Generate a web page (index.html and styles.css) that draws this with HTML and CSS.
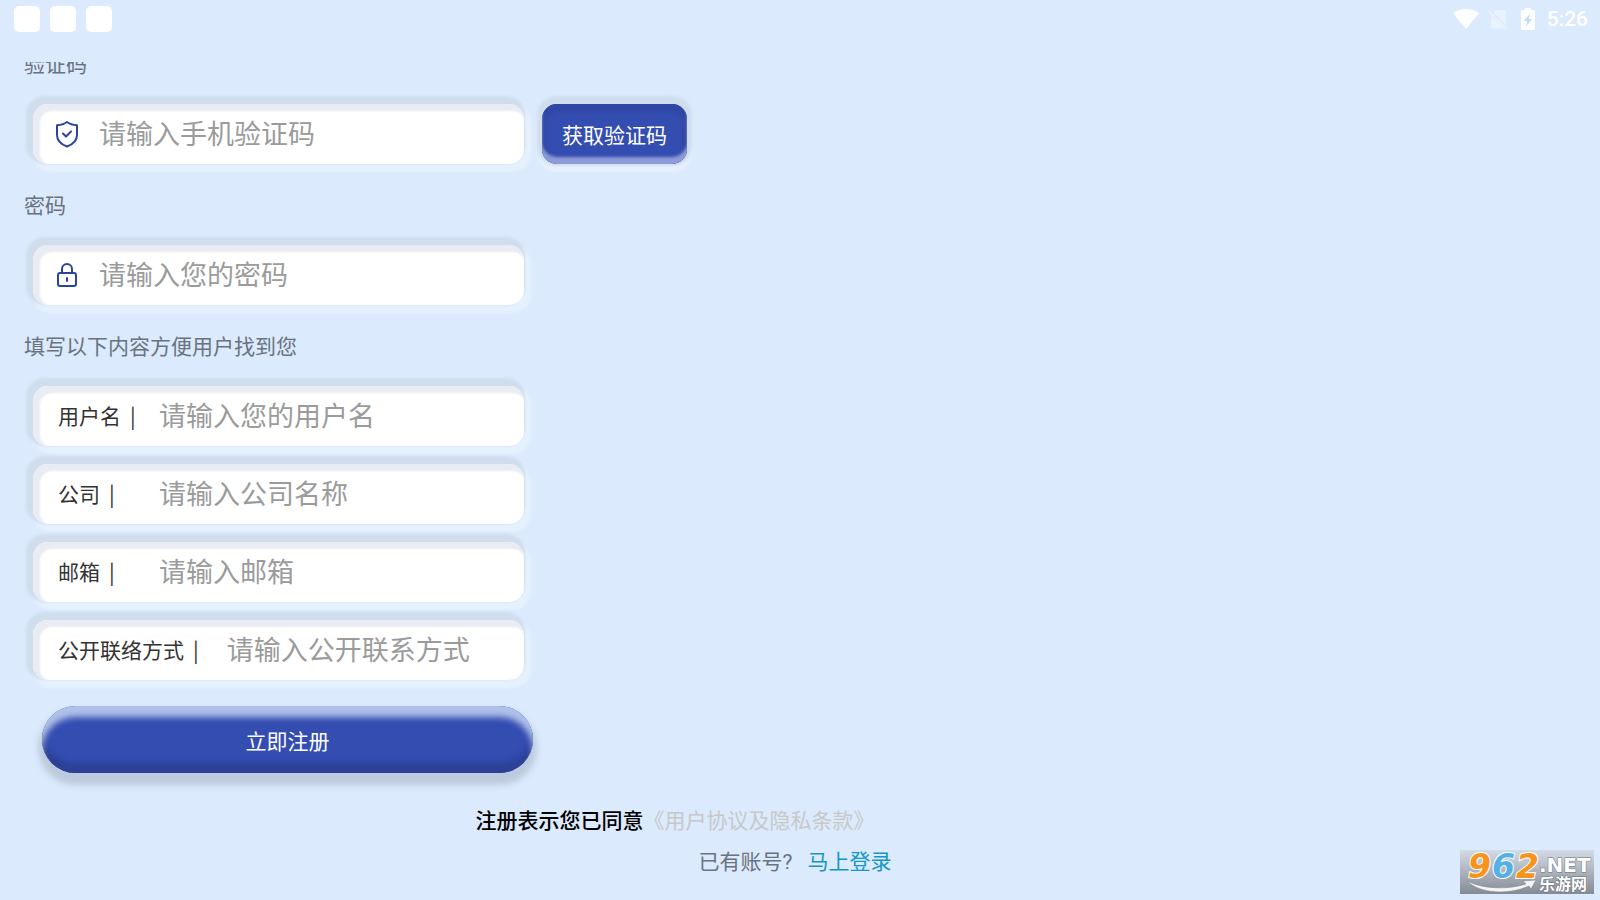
FILE: index.html
```html
<!DOCTYPE html>
<html lang="zh-CN">
<head>
    <meta charset="UTF-8">
    <meta name="viewport" content="width=device-width, initial-scale=1.0">
    <title>注册</title>
    <link rel="stylesheet" href="styles.css">
</head>
<body>
    <header class="status-bar">
        <div class="apps">
            <span class="app"></span>
            <span class="app"></span>
            <span class="app"></span>
        </div>
        <div class="system">
            <svg class="wifi" width="26" height="20" viewBox="0 0 26 20">
                <path d="M0 4.200C7.500-1.400 18.500-1.400 26 4.200L13 20z" fill="#fff"/>
            </svg>
            <svg class="sim" width="20" height="20" viewBox="0 0 20 20">
                <path d="M8 1h9a1 1 0 0 1 1 1v14L5.500 3.500zM2 4.500l15 15H4a1 1 0 0 1-1-1V6z" fill="#fff" opacity=".4"/>
                <path d="M0 1.500L19 20" stroke="#fff" stroke-width="1.500" opacity=".4"/>
            </svg>
            <svg class="battery" width="14" height="22" viewBox="0 0 14 22">
                <path d="M4 0h6v2h3a1 1 0 0 1 1 1v18a1 1 0 0 1-1 1H1a1 1 0 0 1-1-1V3a1 1 0 0 1 1-1h3z" fill="#fff"/>
                <path d="M9 5.500L3 13h3.300L5 18.500 11 11H7.700z" fill="#c4daf3"/>
            </svg>
            <span class="clock">5:26</span>
        </div>
    </header>

    <main class="page">
        <form id="registerForm">
            <label class="title first" for="code">验证码</label>
            <div class="row">
                <div class="field">
                    <svg class="icon" width="24" height="28" viewBox="0 0 24 28" fill="none" stroke="#2b44a3" stroke-width="2" stroke-linecap="round" stroke-linejoin="round">
                        <path d="M12 2C9.500 4 6 5 2 5.200V15c0 5.500 4.500 9.500 10 11.500 5.500-2 10-6 10-11.500V5.200C18 5 14.500 4 12 2z"/>
                        <path d="M8 13.500l3 3 5-5"/>
                    </svg>
                    <input type="text" id="code" name="code" placeholder="请输入手机验证码">
                </div>
                <button type="button" class="btn-code">获取验证码</button>
            </div>

            <label class="title" for="password">密码</label>
            <div class="field">
                <svg class="icon" width="24" height="28" viewBox="0 0 24 28" fill="none" stroke="#2b44a3" stroke-width="2" stroke-linecap="round">
                    <rect x="3" y="12" width="18" height="13" rx="2"/>
                    <path d="M7 12V8a5 5 0 0 1 10 0v4M12 17v3"/>
                </svg>
                <input type="password" id="password" name="password" placeholder="请输入您的密码">
            </div>

            <p class="title">填写以下内容方便用户找到您</p>
            <div class="group">
                <div class="field">
                    <label class="name" for="username">用户名<span>|</span></label>
                    <input type="text" id="username" name="username" placeholder="请输入您的用户名">
                </div>
                <div class="field">
                    <label class="name" for="company">公司<span>|</span></label>
                    <input type="text" id="company" name="company" placeholder="请输入公司名称">
                </div>
                <div class="field">
                    <label class="name" for="email">邮箱<span>|</span></label>
                    <input type="text" id="email" name="email" placeholder="请输入邮箱">
                </div>
                <div class="field">
                    <label class="name wide" for="contact">公开联络方式<span>|</span></label>
                    <input type="text" id="contact" name="contact" placeholder="请输入公开联系方式">
                </div>
            </div>

            <button type="submit" class="btn-register">立即注册</button>
        </form>

        <p class="agree"><b>注册表示您已同意</b><a href="#">《用户协议及隐私条款》</a></p>
        <p class="login">已有账号? <a href="#">马上登录</a></p>
    </main>

    <div class="watermark">
        <svg width="134" height="44" viewBox="0 0 134 44">
            <defs>
                <linearGradient id="wm" x1="0" y1="0" x2="0" y2="1">
                    <stop offset="0" stop-color="#d3dbe6"/>
                    <stop offset="1" stop-color="#858b95"/>
                </linearGradient>
            </defs>
            <rect width="134" height="44" fill="url(#wm)"/>
            <g class="wm-num">
                <text x="8" y="28" fill="#f7941d">9</text>
                <text x="32" y="28" fill="#55b0e8">6</text>
                <text x="56" y="28" fill="#f7941d">2</text>
            </g>
            <path d="M7 31c16 8 40 9 59 3l-3-3 13-1-5 9-2-3C49 45 20 44 7 31z" fill="#f4f5f7" stroke="#7b8088" stroke-width=".5"/>
            <text class="wm-net" x="79" y="22">.NET</text>
            <text class="wm-cn" x="79" y="40">乐游网</text>
        </svg>
    </div>

    <script>
        document.getElementById('registerForm').addEventListener('submit', function(e) {
            e.preventDefault();
        });
    </script>
</body>
</html>
```
FILE: styles.css
```css
* { box-sizing: border-box; }
body { font-family: Roboto, "Noto Sans CJK SC", sans-serif; font-size: 21px; line-height: 22px; margin: 0; background: #dbeafd; color: #69727d; min-height: 100vh; }
p { margin: 0; }
a { text-decoration: none; }
input, button { font-family: inherit; }

.status-bar { display: flex; justify-content: space-between; align-items: flex-start; height: 62px; padding: 6px 12px 0 14px; }
.apps { display: flex; gap: 10px; }
.app { width: 26px; height: 26px; border-radius: 5px; background: #fff; }
.system { display: flex; align-items: center; height: 26px; color: #fff; }
.wifi { margin-right: 9px; }
.sim { margin-right: 13px; }
.battery { margin-right: 12px; }
.clock { font-weight: 500; }

.page { overflow: hidden; padding-bottom: 20px; }
form { padding: 0 24px; }
.title { display: block; margin: 31px 0 28px; }
.title.first { margin-top: -8px; }
.row { display: flex; gap: 18px; }
.group { display: flex; flex-direction: column; gap: 18px; }

.field { display: flex; align-items: center; width: 491px; max-width: 90vw; height: 60px; margin-left: 9px; padding: 0 20px 0 25px; background: #fff; border-radius: 15px; box-shadow: inset 4px 4px 2px 3px #e9ecf2, -3px -4px 3px 4px #cfdded, 3px 4px 3px 4px #e6f1fe; }
.icon { flex: none; margin: 0 20px 0 -3px; }
.field input { flex: 1; min-width: 0; height: 40px; padding: 2px 0 0; border: none; outline: none; background: transparent; font-size: 27px; color: #333; }
.field input::placeholder { color: #9b9b9b; opacity: 1; }
.name { flex: 0 0 101px; color: #333; white-space: nowrap; }
.name.wide { flex-basis: auto; margin-right: 28px; }
.name span { margin-left: 9px; font-family: "Noto Sans CJK SC", sans-serif; }

.btn-code { width: 145px; height: 60px; padding: 0; border: none; border-radius: 15px; background: #344db1; color: #fff; font-size: 21px; cursor: pointer; box-shadow: inset 0 -7px 3px #8f9bd6, inset 0 4px 4px 4px #3047a4, 0 -3px 3px 5px #cfdded, 0 3px 3px 5px #e6f1fe; }
.btn-register { display: block; width: 491px; max-width: 90vw; height: 67px; margin: 26px 0 0 18px; padding: 0; border: none; border-radius: 34px; background: #344db1; color: #fff; font-size: 21px; cursor: pointer; box-shadow: inset 0 11px 6px #b0c1e8, inset 0 -10px 6px #2c4196, 0 8px 6px 4px #bdcadd; }

.agree { margin-top: 37px; padding-right: 250px; text-align: center; }
.agree b { font-weight: 500; color: #000; }
.agree a { color: #c8c8c8; }
.login { margin-top: 19px; padding-right: 10px; text-align: center; }
.login a { margin-left: 10px; color: #1296c8; }

.watermark { position: fixed; right: 6px; bottom: 6px; line-height: 0; }
.wm-num { font: italic bold 33px "DejaVu Sans", sans-serif; stroke: #fff; stroke-width: 2px; paint-order: stroke; }
.wm-net { font: bold 20px "DejaVu Sans", sans-serif; fill: #fff; stroke: #6d737c; stroke-width: 1px; paint-order: stroke; }
.wm-cn { font: bold 16px "Noto Sans CJK SC", sans-serif; fill: #fff; stroke: #6d737c; stroke-width: 1px; paint-order: stroke; }
```
